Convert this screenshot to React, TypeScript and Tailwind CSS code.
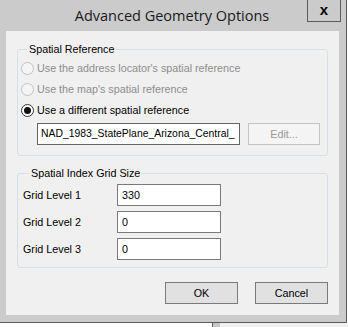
import React from 'react';

const body = { fontFamily: '"Liberation Sans", Arial, sans-serif' };

function Radio({ label, checked, disabled }: { label: string; checked?: boolean; disabled?: boolean }) {
  return (
    <div className="flex items-center h-[21px] gap-[3px]">
      <span
        className={`w-[13px] h-[13px] rounded-full border flex items-center justify-center ${
          disabled ? 'border-[#c2c2c2] bg-[#f4f4f4]' : 'border-[#333333] bg-white'
        }`}
      >
        {checked && <span className="w-[7px] h-[7px] rounded-full bg-[#111111]" />}
      </span>
      <span className={disabled ? 'text-[#8d8d8d]' : 'text-black'}>{label}</span>
    </div>
  );
}

function GridRow({ label, value }: { label: string; value: string }) {
  return (
    <div className="flex items-center h-[22px]">
      <span className="w-[94px]">{label}</span>
      <div className="w-[104px] h-[22px] border border-[#7a7a7a] bg-white px-[4px] flex items-center">{value}</div>
    </div>
  );
}

export default function App() {
  return (
    <div className="w-[348px] h-[327px] bg-white overflow-hidden flex flex-col text-[10.75px] text-black" style={body}>
      <div className="flex">
        <div className="w-[347px] h-[323px] bg-[#cbcbcb] border-r border-b border-[#5a5a5a] flex flex-col">
          {/* title bar */}
          <div className="h-[31px] flex items-start relative">
            <div
              className="flex-1 text-center text-[14.5px] leading-[31px] text-[#1a1a1a] pr-[2px]"
              style={{ fontFamily: '"Open Sans", "Noto Sans", sans-serif' }}
            >
              Advanced Geometry Options
            </div>
            <div className="absolute left-[307px] top-0 w-[34px] h-[22px] border border-t-0 border-[#5a5a5a] flex items-center justify-center text-[15px] font-bold leading-none pb-[2px]">
              x
            </div>
          </div>
          {/* client */}
          <div className="ml-[6px] w-[333px] h-[284px] bg-[#f0f0f0] flex flex-col px-[11px]">
            <fieldset className="mt-[11px] h-[114px] border border-[#d5dfe5] rounded-[3px] px-[3px] pt-[2px]">
              <legend className="ml-[6px] px-[2px] leading-[14px]">Spatial Reference</legend>
              <Radio label="Use the address locator's spatial reference" disabled />
              <Radio label="Use the map's spatial reference" disabled />
              <Radio label="Use a different spatial reference" checked />
              <div className="flex mt-[2px] ml-[16px] gap-[8px]">
                <div className="w-[203px] h-[22px] border border-[#646464] bg-white pl-[3px] flex items-center whitespace-nowrap text-[10.4px]">
                  NAD_1983_StatePlane_Arizona_Central_
                </div>
                <div className="w-[72px] h-[22px] border border-[#c4c4c4] bg-[#f4f4f4] text-[#9a9a9a] flex items-center justify-center">
                  Edit...
                </div>
              </div>
            </fieldset>
            <fieldset className="mt-[10px] h-[102px] border border-[#d5dfe5] rounded-[3px] px-[5px] pt-[4px] flex flex-col">
              <legend className="ml-[6px] px-[2px] leading-[14px]">Spatial Index Grid Size</legend>
              <div className="flex flex-col gap-[5px]">
                <GridRow label="Grid Level 1" value="330" />
                <GridRow label="Grid Level 2" value="0" />
                <GridRow label="Grid Level 3" value="0" />
              </div>
            </fieldset>
            <div className="flex justify-end gap-[17px] mt-[14px]">
              <div className="w-[73px] h-[22px] border border-[#7a7a7a] bg-[#e1e1e1] flex items-center justify-center">OK</div>
              <div className="w-[73px] h-[22px] border border-[#7a7a7a] bg-[#e1e1e1] flex items-center justify-center">Cancel</div>
            </div>
          </div>
        </div>
        <div className="w-[1px] bg-white" />
      </div>
      <div className="flex h-[4px]">
        <div className="w-[212px] bg-white" />
        <div className="w-[1px] bg-[#5a5a5a]" />
        <div className="w-[7px] bg-[#c8c8c8]" />
        <div className="flex-1 bg-[#f0f0f0]" />
      </div>
    </div>
  );
}
